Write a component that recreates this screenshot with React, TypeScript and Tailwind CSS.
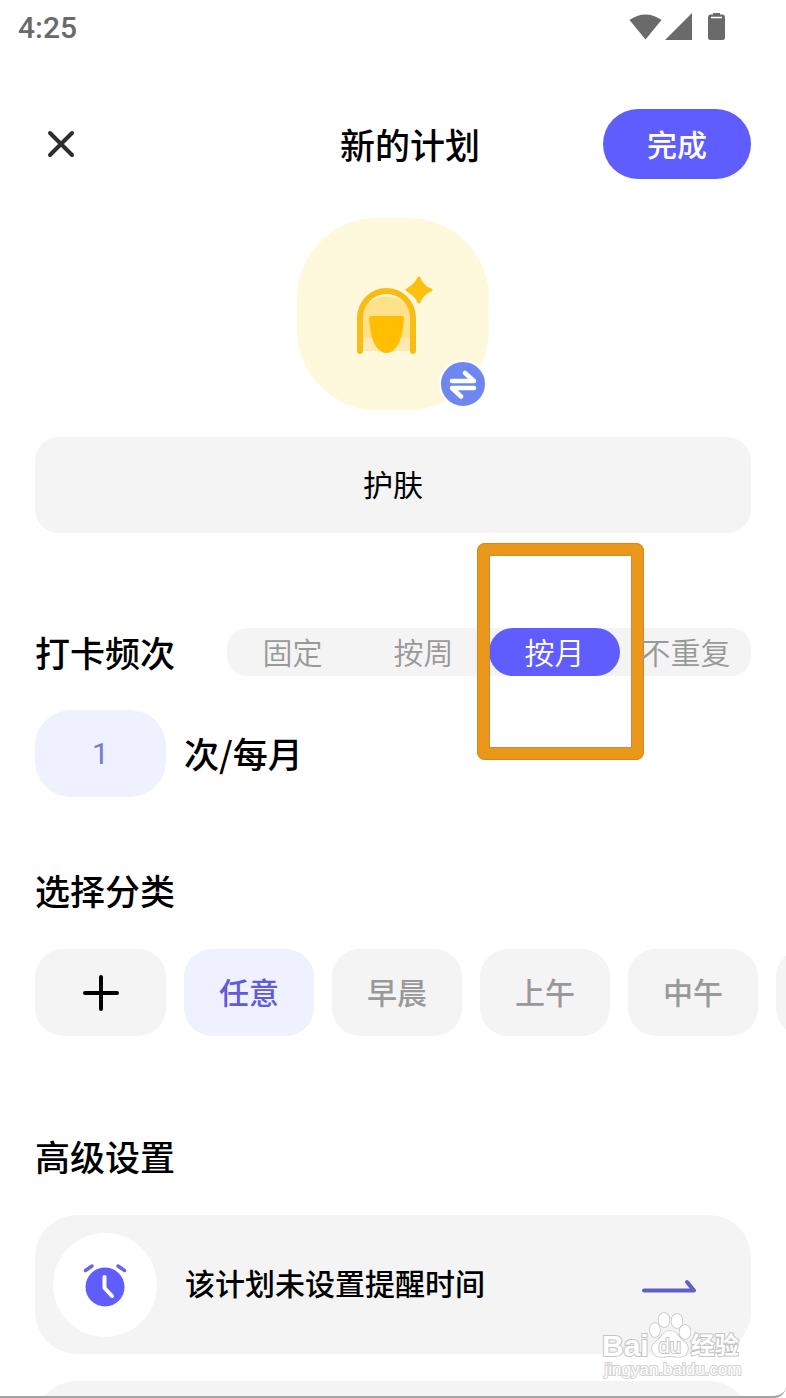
import React, { useState } from "react";
import clsx from "clsx";

const frequencies = ["固定", "按周", "按月", "不重复"];
const categories = ["任意", "早晨", "上午", "中午"];

function StatusBar() {
  return (
    <div className="flex h-14 shrink-0 items-center justify-between pl-[18px] pr-[60px] text-[#6a6a6a]">
      <span className="font-[Roboto,sans-serif] text-[30px] font-medium leading-8">4:25</span>
      <svg width="97" height="30" viewBox="0 0 97 30" fill="currentColor" aria-hidden="true">
        <path d="M0.5 7C10 -0.5 23 -0.5 32.500 7L16.500 26.500Z" />
        <path d="M36 27L63 0V27Z" />
        <path d="M84 -1h7v2.500h3a3 3 0 0 1 2 3V24.500a2.500 2.500 0 0 1-2.500 2.500H81.500a2.500 2.500 0 0 1-2.500-2.500V4.500a3 3 0 0 1 2-3h3Z" />
        <path d="M82 4.500h11" stroke="#fff" strokeWidth="1.500" />
      </svg>
    </div>
  );
}

function Header() {
  return (
    <header className="mt-[53px] grid shrink-0 grid-cols-[182px_1fr_148px] items-center px-[35px]">
      <button type="button" aria-label="关闭" className="flex size-[52px] items-center justify-center">
        <svg width="28" height="28" viewBox="0 0 28 28" stroke="#2c2f2e" strokeWidth="4" strokeLinecap="round">
          <path d="M3 3L25 25M25 3L3 25" />
        </svg>
      </button>
      <h1 className="text-center text-[35px] font-medium">新的计划</h1>
      <button type="button" className="h-[70px] rounded-full bg-[#605dff] pb-0.5 text-[30px] font-medium text-white">
        完成
      </button>
    </header>
  );
}

function PlanIcon() {
  return (
    <div className="relative mx-auto mt-[39px] flex size-48 items-center justify-center rounded-[80px] bg-[#fef8dc]">
      <svg width="84" height="84" viewBox="0 0 84 84" aria-hidden="true">
        <path d="M9 79V46a27 27 0 0 1 53 0V79Z" fill="#ffe28a" />
        <path d="M9 66h53v13H9Z" fill="#feeab0" />
        <path d="M9 79V46a26.500 27 0 0 1 53 0V79" fill="none" stroke="#f7bd16" strokeWidth="6" strokeLinecap="round" />
        <path d="M20 44h31q2 0 2 2c-1 18-6 35-17.500 35S19 64 18 46q0-2 2-2Z" fill="#ffbf00" />
        <path
          d="M68 6q3 9 12 12q-9 4-12 12q-4-8-12-12q8-4 12-12Z"
          fill="#fcc00f"
          stroke="#fcc00f"
          strokeWidth="3"
          strokeLinejoin="round"
        />
      </svg>
      <button
        type="button"
        aria-label="更换图标"
        className="absolute bottom-0.5 right-0.5 flex size-12 items-center justify-center rounded-full border-2 border-[#fffdf3] bg-[#6e86f0]"
      >
        <svg width="30" height="30" viewBox="0 0 30 30" fill="none" stroke="#fff" strokeWidth="4.500" strokeLinecap="round" strokeLinejoin="round">
          <path d="M4 12H26L17 4M26 19H4L13 27.500" />
        </svg>
      </button>
    </div>
  );
}

function FrequencyTabs() {
  const [selected, setSelected] = useState(2);

  return (
    <div role="radiogroup" aria-label="打卡频次" className="grid w-[524px] shrink-0 grid-cols-4 rounded-[20px] bg-[#f4f4f4]">
      {frequencies.map((item, index) => (
        <div key={item} className="relative">
          <label
            className={clsx(
              "flex h-12 cursor-pointer items-center justify-center rounded-full pb-0.5 text-[30px] font-[350]",
              selected === index ? "bg-[#605dff] text-white" : "text-[#999]"
            )}
          >
            <input
              type="radio"
              name="frequency"
              className="sr-only"
              checked={selected === index}
              onChange={() => setSelected(index)}
            />
            {item}
          </label>
          {index === 2 && (
            <div className="pointer-events-none absolute -bottom-[84px] -left-3 -right-6 -top-[85px] rounded-lg border-[12px] border-[#eb981a] outline-1 -outline-offset-1 outline-[#d98518]">
              <div className="h-full border border-[#c98a45]" />
            </div>
          )}
        </div>
      ))}
    </div>
  );
}

function CategoryList() {
  const [active, setActive] = useState("任意");

  return (
    <div className="mt-[33px] flex gap-[18px] overflow-hidden pl-[35px]">
      <button type="button" aria-label="添加分类" className="flex h-[87px] w-[131px] shrink-0 items-center justify-center rounded-[28px] bg-[#f4f4f4]">
        <svg width="36" height="36" viewBox="0 0 36 36" stroke="#000" strokeWidth="4" strokeLinecap="round">
          <path d="M18 2V34M2 18H34" />
        </svg>
      </button>
      {categories.map((item) => (
        <button
          key={item}
          type="button"
          onClick={() => setActive(item)}
          className={clsx(
            "h-[87px] w-[130px] shrink-0 rounded-[28px] pb-0.5 text-[30px] font-medium",
            active === item ? "bg-[#eff1ff] text-[#5f5bd8]" : "bg-[#f4f4f4] text-[#999]"
          )}
        >
          {item}
        </button>
      ))}
      <button type="button" aria-label="更多分类" className="h-[87px] w-[130px] shrink-0 rounded-[28px] bg-[#f4f4f4]" />
    </div>
  );
}

function ReminderCard() {
  return (
    <button type="button" className="mt-[33px] flex h-[139px] w-full items-center rounded-[42px] bg-[#f4f4f4] pl-[18px] pr-[54px]">
      <span className="flex size-[104px] items-center justify-center rounded-full bg-white">
        <svg width="44" height="44" viewBox="0 0 44 44" fill="none" strokeLinecap="round" strokeLinejoin="round">
          <circle cx="22" cy="24" r="19.500" fill="#605dff" />
          <path d="M2.500 7.500L9 3M35 3L41.500 7.500" stroke="#6b66dc" strokeWidth="3.500" />
          <path d="M21.500 14V25L29 33" stroke="#fff" strokeWidth="4" />
        </svg>
      </span>
      <span className="ml-7 flex-1 pb-1 text-left text-[30px] font-medium">该计划未设置提醒时间</span>
      <svg width="56" height="16" viewBox="0 0 56 16" fill="none" stroke="#605fc9" strokeWidth="4" strokeLinecap="round" strokeLinejoin="round">
        <path d="M3 13.500H53L46 5" />
      </svg>
    </button>
  );
}

function Watermark() {
  return (
    <div className="pointer-events-none absolute bottom-[14px] right-[42px] w-[142px] text-white [paint-order:stroke] [-webkit-text-stroke:2px_#c4c4c4]">
      <div className="flex items-end font-['Liberation_Sans','Noto_Sans_CJK_SC',sans-serif] font-bold">
        <span className="text-[30px] leading-6">Bai</span>
        <div className="relative flex h-[46px] w-[42px] shrink-0 items-end justify-center">
          <svg className="absolute inset-0" width="42" height="46" viewBox="0 0 42 46" fill="#fff" stroke="#c4c4c4" strokeWidth="1.500" aria-hidden="true">
            <ellipse cx="6" cy="18" rx="5" ry="7" />
            <ellipse cx="15" cy="8" rx="5.500" ry="7" />
            <ellipse cx="28" cy="9" rx="5.500" ry="7" />
            <ellipse cx="36" cy="20" rx="5.500" ry="7" />
            <path d="M21 19C15 19 13 24 9 28C3 32 2 36 4 40C6 46 12 45 21 44C30 45 36 46 38 40C40 36 39 32 33 28C29 24 27 19 21 19Z" />
          </svg>
          <span className="relative text-[20px] font-normal leading-6">du</span>
        </div>
        <span className="whitespace-nowrap text-2xl leading-6">经验</span>
      </div>
      <div className="text-center font-['Liberation_Sans',sans-serif] text-[17px] leading-6 [-webkit-text-stroke:2px_#d2d2d2]">jingyan.baidu.com</div>
    </div>
  );
}

export default function App() {
  return (
    <div lang="zh-CN" className="relative flex h-screen flex-col overflow-hidden rounded-br-xl border-b-2 border-[#a3a3a3] bg-white font-['Noto_Sans_CJK_SC',sans-serif] text-black">
      <StatusBar />
      <Header />
      <main className="min-h-0 flex-1 overflow-hidden">
        <PlanIcon />
        <div className="px-[35px]">
          <input
            aria-label="计划名称"
            defaultValue="护肤"
            className="mt-[27px] block h-24 w-full rounded-3xl bg-[#f4f4f4] pb-1 text-center text-[30px]"
          />
          <div className="mt-[95px] flex h-12 items-center justify-between">
            <h2 className="whitespace-nowrap text-[35px] font-medium">打卡频次</h2>
            <FrequencyTabs />
          </div>
          <label className="mt-[34px] flex items-center gap-[18px] text-[35px] font-medium">
            <input
              aria-label="每月次数"
              inputMode="numeric"
              defaultValue="1"
              className="h-[87px] w-[131px] rounded-[36px] bg-[#eff1ff] text-center font-[Roboto,sans-serif] text-[30px] font-normal text-[#7a78cc]"
            />
            次/每月
          </label>
          <h2 className="mt-[67px] text-[35px] font-medium leading-[52px]">选择分类</h2>
        </div>
        <CategoryList />
        <div className="px-[35px]">
          <h2 className="mt-[94px] text-[35px] font-medium leading-[52px]">高级设置</h2>
          <ReminderCard />
          <div className="mt-[27px] h-[139px] rounded-[42px] bg-[#f4f4f4]" />
        </div>
      </main>
      <Watermark />
    </div>
  );
}
